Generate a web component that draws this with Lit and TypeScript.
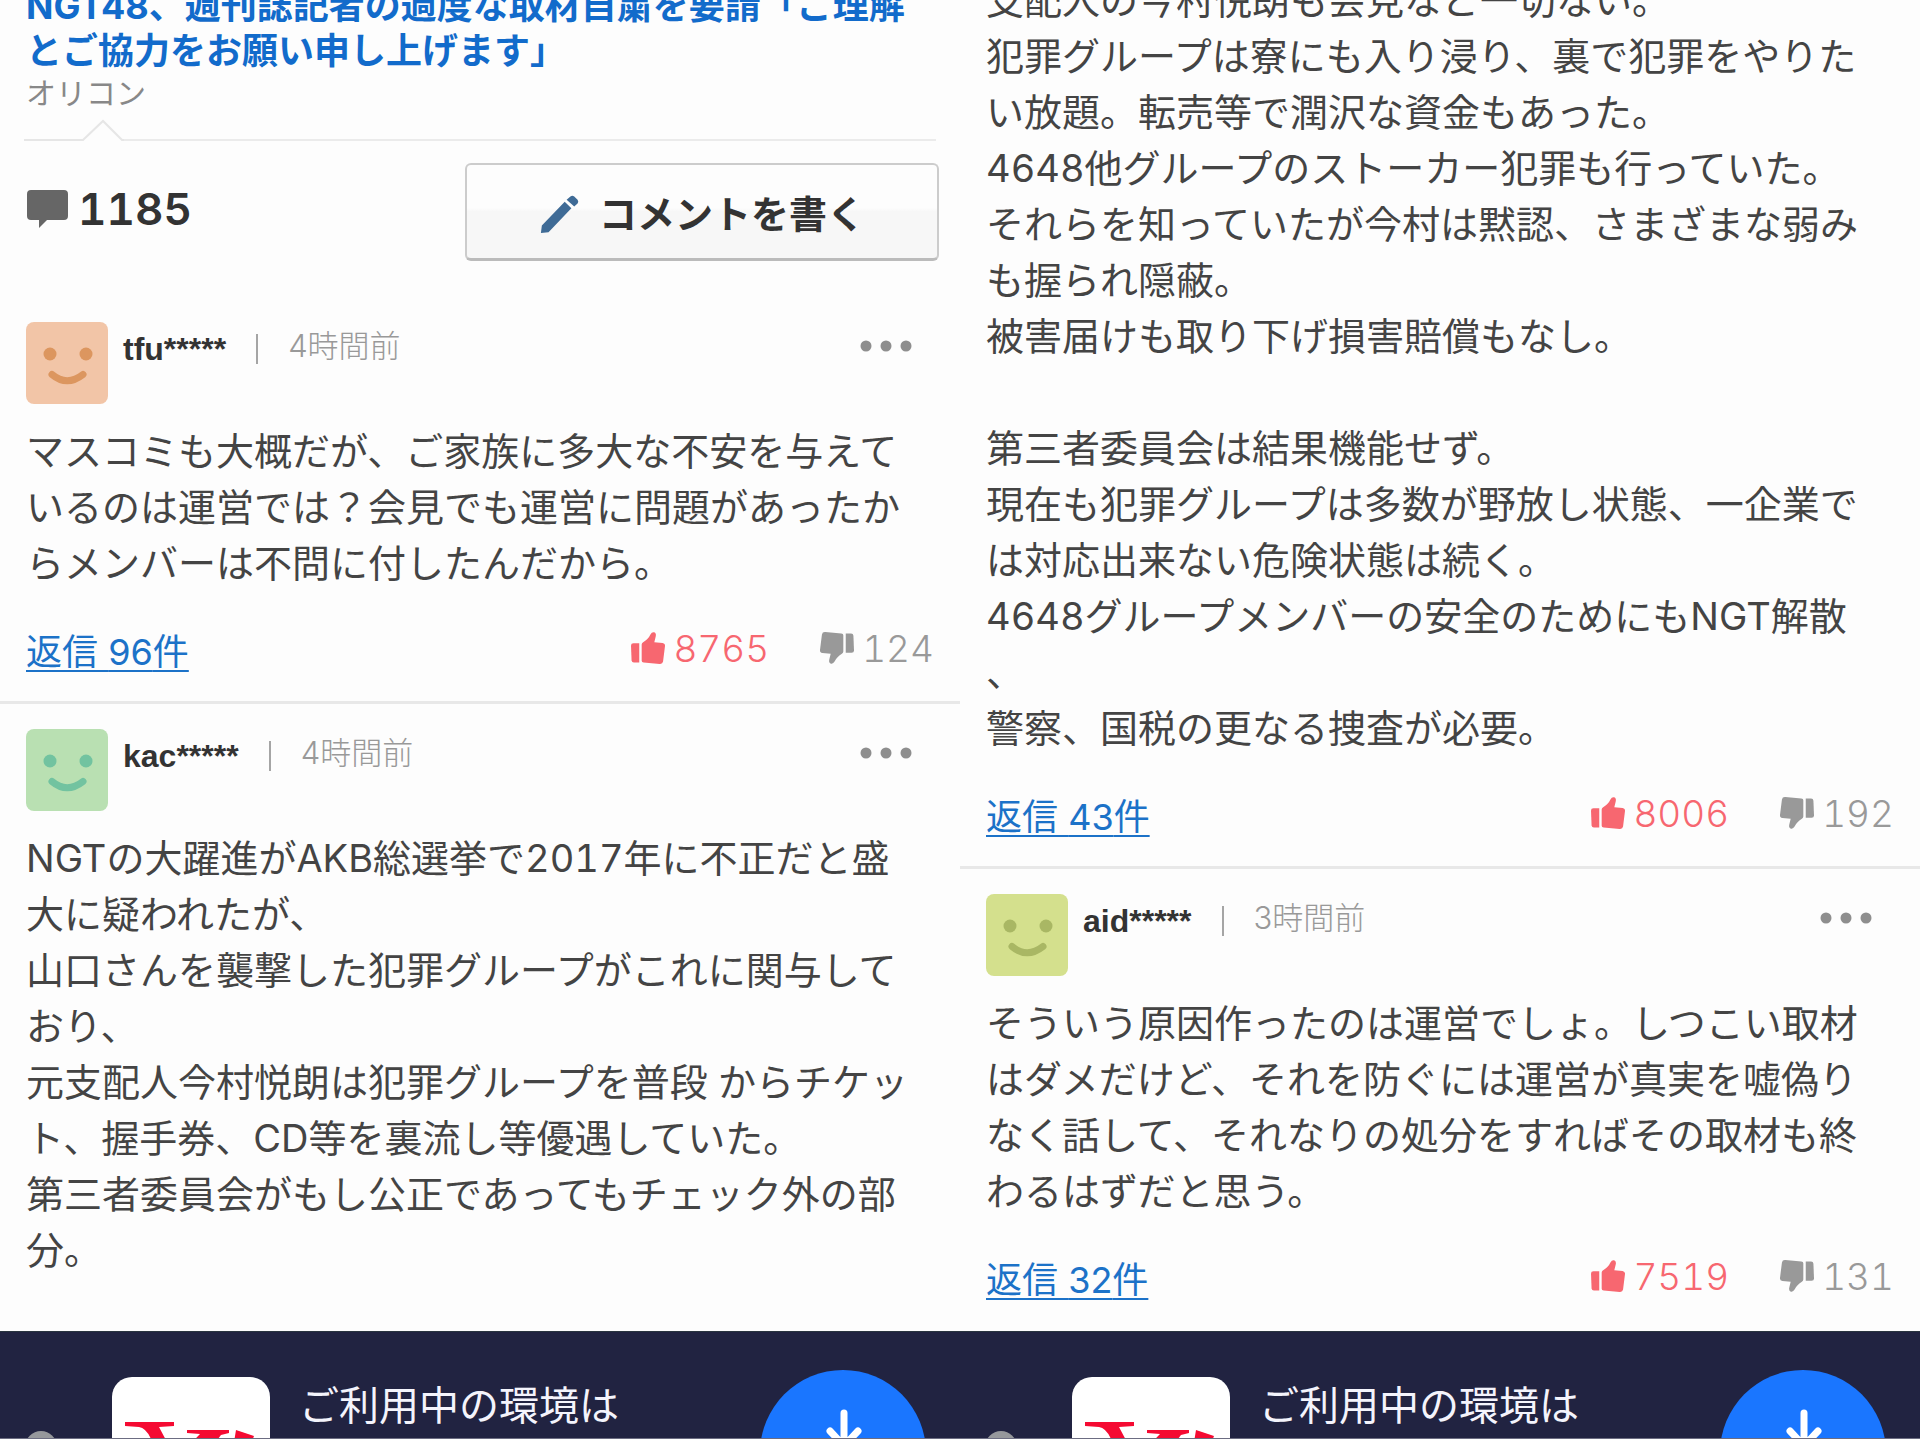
import { LitElement, html, css, svg, nothing } from "lit";
import { customElement, property } from "lit/decorators.js";

interface Author {
  name: string;
  time: string;
  face: string;
  ink: string;
}

interface Votes {
  replies: number;
  likes: number;
  dislikes: number;
}

interface Comment {
  id: string;
  text: string;
  author?: Author;
  votes?: Votes;
}

const LEFT: Comment[] = [
  {
    id: "c1",
    author: { name: "tfu*****", time: "4時間前", face: "#f2c5a7", ink: "#dc965f" },
    votes: { replies: 96, likes: 8765, dislikes: 124 },
    text: `マスコミも大概だが、ご家族に多大な不安を与えて
いるのは運営では？会見でも運営に問題があったか
らメンバーは不問に付したんだから。`,
  },
  {
    id: "c2",
    author: { name: "kac*****", time: "4時間前", face: "#b9e0b2", ink: "#72c3a0" },
    text: `NGTの大躍進がAKB総選挙で2017年に不正だと盛
大に疑われたが、
山口さんを襲撃した犯罪グループがこれに関与して
おり、
元支配人今村悦朗は犯罪グループを普段 からチケッ
ト、握手券、CD等を裏流し等優遇していた。
第三者委員会がもし公正であってもチェック外の部
分。`,
  },
];

const RIGHT: Comment[] = [
  {
    id: "c3",
    votes: { replies: 43, likes: 8006, dislikes: 192 },
    text: `支配人の今村悦朗も会見など一切ない。
犯罪グループは寮にも入り浸り、裏で犯罪をやりた
い放題。転売等で潤沢な資金もあった。
4648他グループのストーカー犯罪も行っていた。
それらを知っていたが今村は黙認、さまざまな弱み
も握られ隠蔽。
被害届けも取り下げ損害賠償もなし。

第三者委員会は結果機能せず。
現在も犯罪グループは多数が野放し状態、一企業で
は対応出来ない危険状態は続く。
4648グループメンバーの安全のためにもNGT解散
、
警察、国税の更なる捜査が必要。`,
  },
  {
    id: "c4",
    author: { name: "aid*****", time: "3時間前", face: "#d4e08d", ink: "#a9b764" },
    votes: { replies: 32, likes: 7519, dislikes: 131 },
    text: `そういう原因作ったのは運営でしょ。しつこい取材
はダメだけど、それを防ぐには運営が真実を嘘偽り
なく話して、それなりの処分をすればその取材も終
わるはずだと思う。`,
  },
];

const thumb = svg`
  <path d="M1 15Q1 12.500 3.500 12.500H9.500V32.500H4Q1.800 32.500 1.600 30Z"/>
  <path d="M12 14Q12 12.500 13.500 11.500Q19 8 21 3.500Q22.500 .8 24.800 1.400Q27.200 2.400 26.500 5.500L25 11.500L33.500 12.300Q36.300 12.800 36 15.500L34 31.500Q33.500 34.300 30.500 34L14 32.500Q12 32.300 12 30.500Z"/>`;

@customElement("comment-item")
export class CommentItem extends LitElement {
  @property({ attribute: false }) data!: Comment;

  static styles = css`
    :host { display: block; padding: 25px 26px; }
    :host(.ruled) { border-bottom: 3px solid #e8e8e8; }
    .head { display: flex; height: 82px; margin-bottom: 19px; }
    .avatar { width: 82px; height: 82px; flex: none; }
    .meta { display: flex; align-items: flex-start; margin-left: 15px; }
    .user { font: bold 32px/54px "Liberation Sans", Arial, sans-serif; color: #333; }
    .rule { width: 2px; height: 30px; margin: 12px 30px 0; background: #a5a5a5; }
    .time { font-size: 31px; line-height: 48px; font-weight: 300; color: #999; }
    .more { display: flex; align-items: center; height: 48px; margin-left: auto; padding: 0; border: 0; background: none; }
    .more svg { width: 52px; height: 12px; margin-right: 22px; }
    .text { margin: 0; font-size: 38px; line-height: 56px; color: #444; white-space: pre-line; font-variant-numeric: tabular-nums; }
    .foot { display: flex; align-items: flex-start; height: 50px; margin-top: 35px; }
    .reply { margin-right: auto; font-size: 36px; line-height: 52px; color: #1c72c8; text-decoration-thickness: 2px; text-underline-offset: 5px; }
    .vote { display: flex; align-items: center; gap: 7px; height: 44px; padding: 0; border: 0; background: none; color: #999; font: inherit; font-size: 37px; font-weight: 300; font-variant-numeric: tabular-nums; }
    .vote svg { width: 36px; height: 34px; fill: currentColor; }
    .up { color: #f76770; margin-right: 50px; }
    .down svg { transform: rotate(180deg); }
  `;

  private renderHead(a: Author) {
    return html`
      <header class="head">
        <svg class="avatar" viewBox="0 0 82 82" aria-hidden="true">
          <rect width="82" height="82" rx="8" fill=${a.face} />
          <circle cx="24" cy="32" r="6.500" fill=${a.ink} />
          <circle cx="60" cy="32" r="6.500" fill=${a.ink} />
          <path d="M26 52.500Q41 65 57 52.500" fill="none" stroke=${a.ink} stroke-width="7" stroke-linecap="round" />
        </svg>
        <div class="meta">
          <span class="user">${a.name}</span><span class="rule"></span><span class="time">${a.time}</span>
        </div>
        <button class="more" aria-label="メニュー">
          <svg viewBox="0 0 52 12" fill="#8e8e8e"><circle cx="6" cy="6" r="5.500" /><circle cx="26" cy="6" r="5.500" /><circle cx="46" cy="6" r="5.500" /></svg>
        </button>
      </header>
    `;
  }

  private renderFoot(v: Votes) {
    return html`
      <div class="foot">
        <a class="reply" href="#${this.data.id}">返信 ${v.replies}件</a>
        <button class="vote up"><svg viewBox="0 0 37 35">${thumb}</svg>${v.likes}</button>
        <button class="vote down"><svg viewBox="0 0 37 35">${thumb}</svg>${v.dislikes}</button>
      </div>
    `;
  }

  render() {
    const { author, votes, text } = this.data;
    return html`
      ${author ? this.renderHead(author) : nothing}
      <p class="text">${text}</p>
      ${votes ? this.renderFoot(votes) : nothing}
    `;
  }
}

@customElement("app-banner")
export class AppBanner extends LitElement {
  static styles = css`
    :host { display: flex; height: 106px; flex: none; align-items: flex-start; overflow: hidden; background: #212341; border-top: 1px solid #29343f; border-bottom: 1px solid #6c6d82; color: #f4f4fc; }
    .close { width: 32px; height: 32px; flex: none; margin: 99px 0 0 25px; padding: 0; border: 0; border-radius: 50%; background: #96989c; }
    .logo { width: 158px; height: 158px; flex: none; margin: 45px 29px 0 55px; }
    .msg { margin: 0; padding-top: 46px; font-size: 40px; line-height: 56px; }
    .get { width: 166px; height: 166px; flex: none; margin: 38px 34px 0 auto; border-radius: 50%; background: #1a76ff; }
    .get svg { display: block; }
  `;

  render() {
    return html`
      <button class="close" aria-label="閉じる"></button>
      <svg class="logo" viewBox="0 0 158 158" aria-hidden="true">
        <rect width="158" height="158" rx="20" fill="#fff" />
        <path fill="#f50a32" d="M13 45H62V49L47 50L64 82L88 57L75 56V53H117V56L109 58L80 96V120H56V94L39 62Q34 51 27 50L13 49ZM124 53L142 59L128 96H117Z" />
      </svg>
      <p class="msg">ご利用中の環境は</p>
      <a class="get" href="#app" aria-label="ダウンロード">
        <svg viewBox="0 0 166 166" fill="none" stroke="#fff" stroke-width="7" stroke-linecap="round" stroke-linejoin="round"><path d="M84 43V76M70 61L84 76L98 61" /></svg>
      </a>
    `;
  }
}

@customElement("app-root")
export class AppRoot extends LitElement {
  static styles = css`
    :host { display: grid; grid-template-columns: 1fr 1fr; height: 100vh; overflow: hidden; background: #fdfdfd; font-family: Inter, "Noto Sans CJK JP", sans-serif; }
    .pane { display: flex; flex-direction: column; min-width: 0; min-height: 0; }
    .feed { display: flex; flex-direction: column; flex: 1; min-height: 0; overflow: hidden; }
    .latest { justify-content: flex-end; padding-bottom: 2px; }
    .feed > * { flex: none; }
    .article { margin: -16px 26px 0; }
    .title { margin: 0; font-size: 36px; line-height: 45px; font-weight: 700; }
    .title a { color: #126bcb; text-decoration: none; }
    .source { margin: 0; font-size: 30px; line-height: 38px; color: #888; }
    .notch { display: flex; align-items: flex-end; height: 22px; margin: 7px 24px 22px; }
    .notch svg { width: 100px; height: 22px; flex: none; }
    .rule { flex: 1; height: 2px; background: #ebebeb; }
    .bar { display: flex; align-items: flex-start; justify-content: space-between; margin: 0 21px 36px 27px; }
    .count { display: flex; align-items: center; gap: 10px; height: 92px; font-size: 44px; font-weight: 600; color: #333; font-variant-numeric: tabular-nums; }
    .count svg { width: 41px; height: 40px; }
    .write { display: flex; align-items: center; justify-content: center; gap: 20px; width: 52%; height: 98px; padding: 0; border: 2px solid #ccc; border-bottom: 3px solid #bbb; border-radius: 6px; background: linear-gradient(#fdfdfd 46%, #f7f7f7 50%); font: inherit; font-size: 38px; font-weight: 700; color: #333; }
    .write svg { width: 40px; height: 40px; margin-top: 6px; }
  `;

  render() {
    return html`
      <section class="pane">
        <div class="feed">
          <div class="article">
            <h1 class="title"><a href="#article">NGT48、週刊誌記者の過度な取材自粛を要請「ご理解<br />とご協力をお願い申し上げます」</a></h1>
            <p class="source">オリコン</p>
          </div>
          <div class="notch">
            <svg viewBox="0 0 100 22" fill="none" stroke="#e6e6e6" stroke-width="2"><path d="M0 21H59L79 2L98 21H100" /></svg>
            <span class="rule"></span>
          </div>
          <div class="bar">
            <div class="count">
              <svg viewBox="0 0 41 40" aria-hidden="true"><path fill="#666" d="M4 1H37Q41 1 41 5V27Q41 31 37 31H20L12 39V31H4Q0 31 0 27V5Q0 1 4 1Z" /></svg>
              <span>1185</span>
            </div>
            <button class="write">
              <svg viewBox="0 0 42 42" fill="#3f6b96" aria-hidden="true"><path d="M2 40L3 32L27 7L34 14L10 39ZM29 5L33 1.500Q35 0 37 1.500L40.500 5Q42 7 40.500 9L37 12Z" /></svg>
              <span>コメントを書く</span>
            </button>
          </div>
          ${LEFT.map((c, i) => html`<comment-item class=${i === 0 ? "ruled" : ""} .data=${c}></comment-item>`)}
        </div>
        <app-banner></app-banner>
      </section>
      <section class="pane">
        <div class="feed latest">
          ${RIGHT.map((c, i) => html`<comment-item class=${i === 0 ? "ruled" : ""} .data=${c}></comment-item>`)}
        </div>
        <app-banner></app-banner>
      </section>
    `;
  }
}
